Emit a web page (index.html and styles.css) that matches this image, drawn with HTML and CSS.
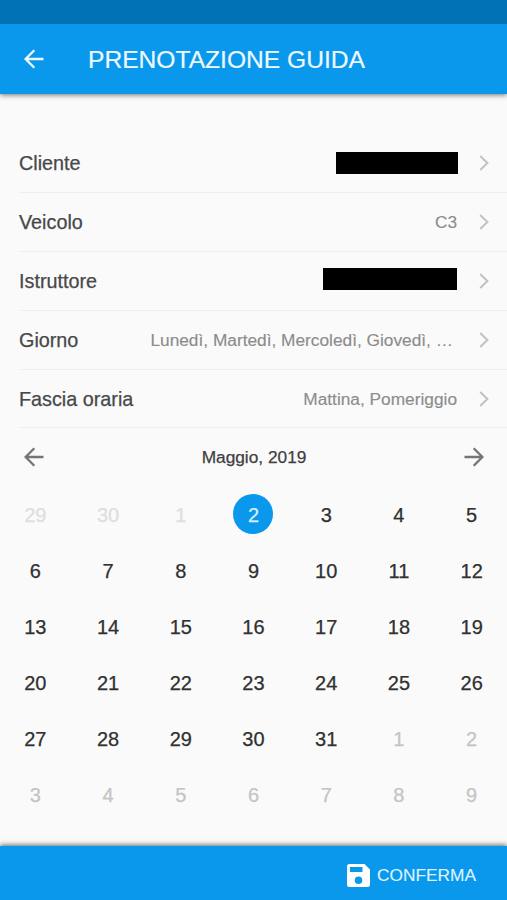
FILE: index.html
```html
<!DOCTYPE html>
<html lang="it">
<head>
<meta charset="utf-8">
<title>Prenotazione guida</title>
<link rel="stylesheet" href="styles.css">
</head>
<body>
<div class="screen">
  <div class="status-bar"></div>
  <header class="app-bar">
    <svg class="arrow" viewBox="0 0 20 20"><path d="M19.5 10H2M10.3 1.2 1.6 10l8.7 8.8"/></svg>
    <h1>PRENOTAZIONE GUIDA</h1>
  </header>
  <main>
    <ul class="fields">
      <li><span class="label">Cliente</span><span class="redacted client"></span><svg class="chevron" viewBox="0 0 10 16"><path d="m1.2 1 7.2 7-7.2 7"/></svg></li>
      <li><span class="label">Veicolo</span><span class="value">C3</span><svg class="chevron" viewBox="0 0 10 16"><path d="m1.2 1 7.2 7-7.2 7"/></svg></li>
      <li><span class="label">Istruttore</span><span class="redacted teacher"></span><svg class="chevron" viewBox="0 0 10 16"><path d="m1.2 1 7.2 7-7.2 7"/></svg></li>
      <li><span class="label">Giorno</span><span class="value days-value">Lunedì, Martedì, Mercoledì, Giovedì, …</span><svg class="chevron" viewBox="0 0 10 16"><path d="m1.2 1 7.2 7-7.2 7"/></svg></li>
      <li><span class="label">Fascia oraria</span><span class="value">Mattina, Pomeriggio</span><svg class="chevron" viewBox="0 0 10 16"><path d="m1.2 1 7.2 7-7.2 7"/></svg></li>
    </ul>
    <div class="month">
      <svg class="arrow" viewBox="0 0 20 20"><path d="M19.5 10H2M10.3 1.2 1.6 10l8.7 8.8"/></svg>
      <span>Maggio, 2019</span>
      <svg class="arrow" viewBox="0 0 20 20"><path d="M.5 10H18M9.7 1.2l8.7 8.8-8.7 8.8"/></svg>
    </div>
    <div class="calendar">
      <span class="past">29</span><span class="past">30</span><span class="past">1</span><span class="selected">2</span><span>3</span><span>4</span><span>5</span>
      <span>6</span><span>7</span><span>8</span><span>9</span><span>10</span><span>11</span><span>12</span>
      <span>13</span><span>14</span><span>15</span><span>16</span><span>17</span><span>18</span><span>19</span>
      <span>20</span><span>21</span><span>22</span><span>23</span><span>24</span><span>25</span><span>26</span>
      <span>27</span><span>28</span><span>29</span><span>30</span><span>31</span><span class="next">1</span><span class="next">2</span>
      <span class="next">3</span><span class="next">4</span><span class="next">5</span><span class="next">6</span><span class="next">7</span><span class="next">8</span><span class="next">9</span>
    </div>
  </main>
  <footer class="action-bar">
    <svg class="save" viewBox="0 0 23 23"><path fill-rule="evenodd" d="M2.5 0H17.5L23 5.500V20.500a2.500 2.500 0 0 1-2.500 2.500h-18A2.500 2.500 0 0 1 0 20.500v-18A2.500 2.500 0 0 1 2.500 0ZM3 3v5h12.500V3ZM11.500 12.500a3.800 3.800 0 1 0 0 7.600a3.800 3.800 0 1 0 0-7.600Z"/></svg>
    <span>CONFERMA</span>
  </footer>
</div>
</body>
</html>
```
FILE: styles.css
```css
* { box-sizing: border-box; }
body { margin: 0; font-family: "Liberation Sans", Arial, sans-serif; background: #fafafa; }
.screen { width: 507px; height: 900px; display: flex; flex-direction: column; overflow: hidden; }
.status-bar { height: 24px; background: #0071b5; flex: none; position: relative; z-index: 1; }
.app-bar {
  height: 70px; flex: none; display: flex; align-items: center; padding-left: 24px;
  background: #0998ec; color: #eef8ff; box-shadow: 0 1px 5px rgba(0,0,0,.55);
}
.app-bar h1 { margin: 2px 0 0 44px; font-size: 24.6px; font-weight: 400; line-height: 30px; white-space: nowrap; -webkit-text-stroke: .2px; }
.arrow { width: 20px; height: 20px; fill: none; stroke: currentColor; stroke-width: 2.3; flex: none; }
main { flex: 1; padding-top: 40px; }
.fields { list-style: none; margin: 0; padding: 0 0 0 19px; }
.fields li {
  height: 58.9px; display: flex; align-items: center; padding-right: 18px;
  border-bottom: 1px solid #efefef;
}
.label { font-size: 19.8px; line-height: 24px; color: #484848; margin-right: auto; white-space: nowrap; -webkit-text-stroke: .25px; }
.value { font-size: 17.3px; line-height: 22px; color: #8c8c8c; margin-right: 22px; white-space: nowrap; -webkit-text-stroke: .15px; }
.days-value { margin-right: 26px; }
.redacted { height: 22px; background: #000; }
.client { width: 122px; margin-right: 21px; }
.teacher { width: 134px; margin-right: 22px; margin-bottom: 4px; }
.chevron { width: 10px; height: 16px; fill: none; stroke: #c2c2c2; stroke-width: 2; flex: none; }
.month {
  height: 58px; display: flex; align-items: center; justify-content: space-between;
  padding: 0 23px 0 24px; font-size: 17.3px; color: #404040; -webkit-text-stroke: .25px;
}
.month .arrow { color: #757575; }
.calendar {
  display: grid; grid-template-columns: repeat(7, 1fr); grid-auto-rows: 56px;
  margin: 0 -1px; justify-items: center; align-items: center;
  font-size: 20px; line-height: 42px; text-align: center; color: #303030; -webkit-text-stroke: .25px;
}
.calendar span { width: 40px; height: 40px; }
.calendar .past { color: #dedede; }
.calendar .next { color: #c4c4c4; }
.calendar .selected { background: #0998ec; color: #d5efff; border-radius: 50%; }
.action-bar {
  height: 54px; flex: none; display: flex; align-items: center; justify-content: flex-end;
  padding: 5px 31px 0 0; background: #0998ec; color: #dff3ff; font-size: 17.3px;
  box-shadow: 0 -1px 5px rgba(0,0,0,.6); -webkit-text-stroke: .15px;
}
.save { width: 23px; height: 23px; fill: #fff; margin-right: 7px; }
```
